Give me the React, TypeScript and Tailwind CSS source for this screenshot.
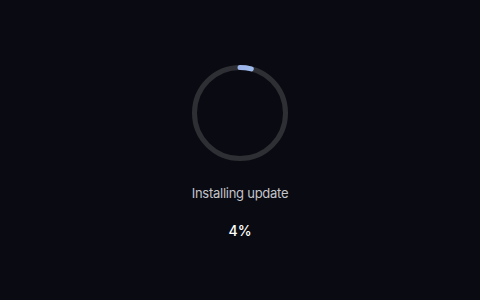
import React from 'react';

const progress = 4;

const App: React.FC = () => {
    const r = 45.5;
    const circ = 2 * Math.PI * r;
    const dash = (progress / 100) * circ;

    return (
        <div className="flex flex-col items-center w-full h-[300px] bg-[#0a0b12] pt-[65px] font-['Inter','Noto_Sans',sans-serif]">
            {/* Progress ring */}
            <svg width="96" height="96" viewBox="0 0 96 96" className="-rotate-90">
                <defs>
                    <linearGradient id="arc" x1="0" y1="0" x2="0" y2="1">
                        <stop offset="0%" stopColor="#9197e0" />
                        <stop offset="100%" stopColor="#a6cff2" />
                    </linearGradient>
                </defs>
                <circle cx="48" cy="48" r={r} fill="none" stroke="#2e2f34" strokeWidth="5" />
                <circle
                    cx="48"
                    cy="48"
                    r={r}
                    fill="none"
                    stroke="url(#arc)"
                    strokeWidth="5"
                    strokeLinecap="round"
                    strokeDasharray={`${dash} ${circ}`}
                />
            </svg>

            <p className="mt-[22px] text-[13px] leading-5 tracking-[-0.02em] text-[#c3c4cb]">Installing update</p>
            <p className="mt-[16px] text-[14px] leading-6 font-medium text-white">{progress}%</p>
        </div>
    );
};

export default App;
